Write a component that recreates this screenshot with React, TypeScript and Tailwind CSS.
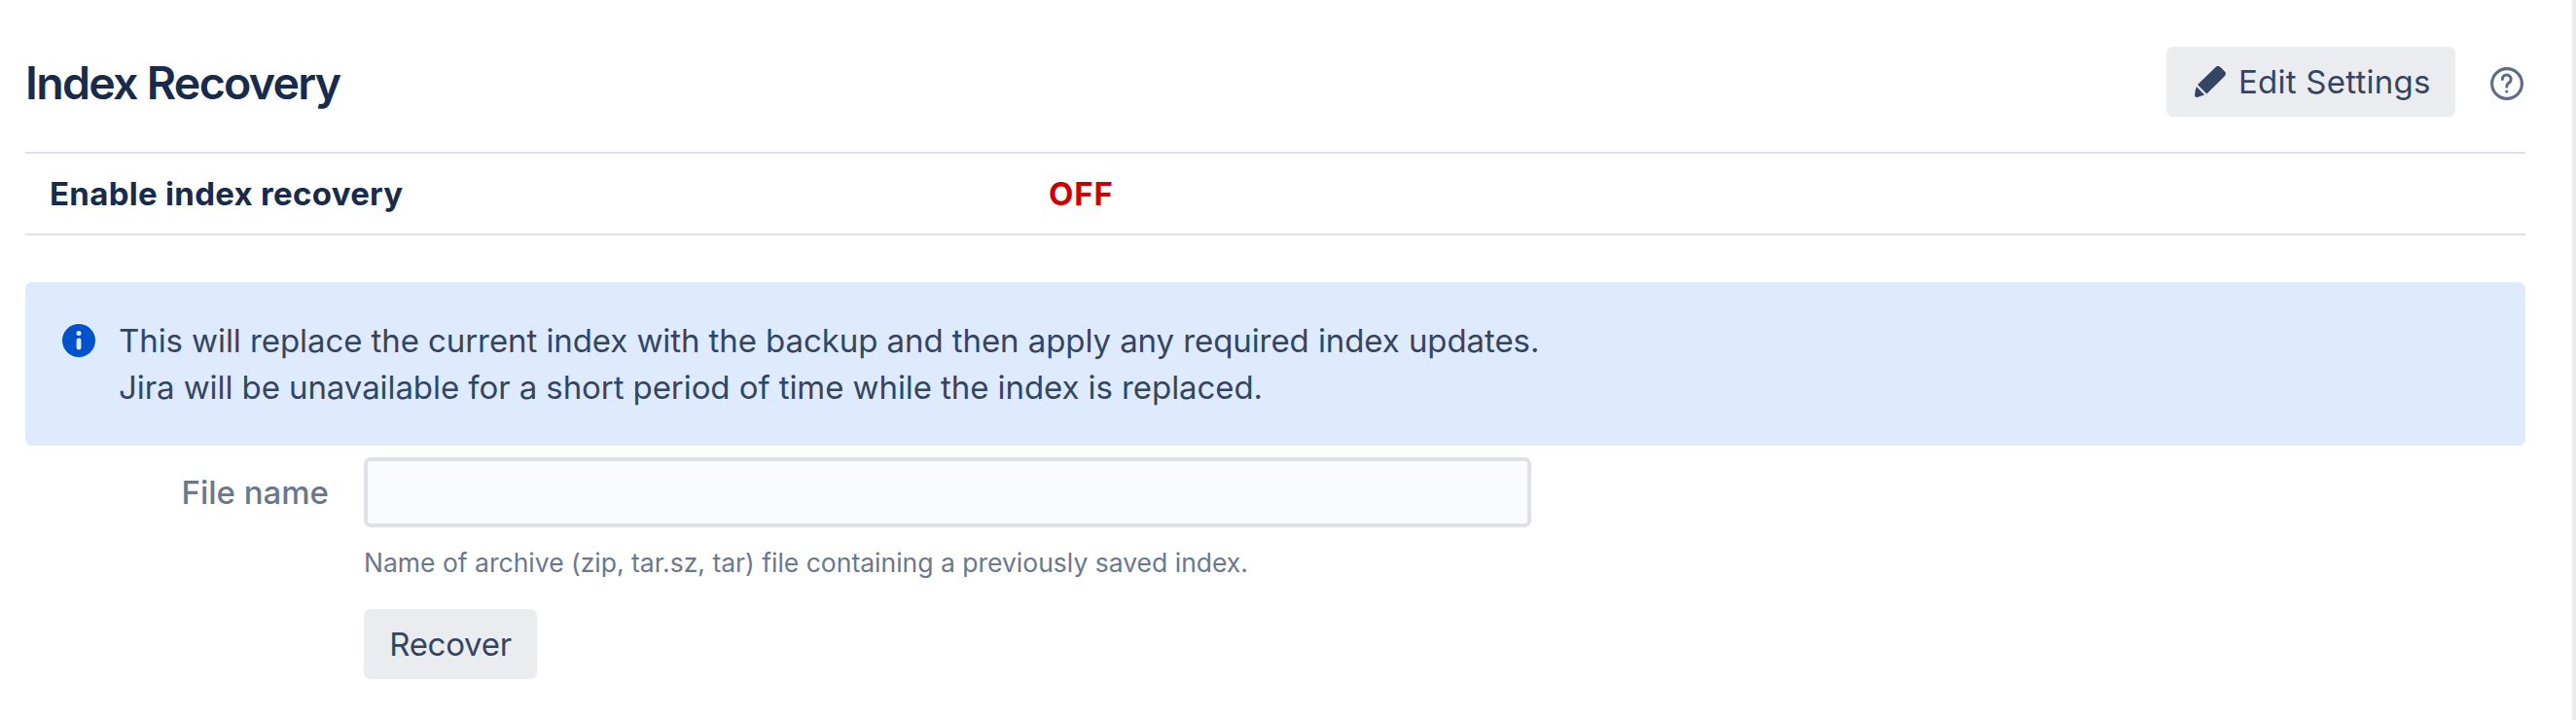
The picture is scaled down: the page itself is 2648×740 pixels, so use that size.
function PencilIcon() {
  return (
    <svg className="h-8 w-8 shrink-0" viewBox="0 0 32 32" fill="currentColor">
      <path d="M21.3 1.4a3.8 3.8 0 0 1 5.4 0l3.9 3.9a3.8 3.8 0 0 1 0 5.4L12.4 28.6 3 19.3z" transform="translate(0 -.2)" />
      <path d="M2 21 10.1 29.4 2.6 32Q0 32.2.1 29.7Q.2 25 2 21z" />
    </svg>
  );
}

function HelpIcon() {
  return (
    <svg className="h-[34px] w-[34px] shrink-0" viewBox="0 0 34 34" fill="none" stroke="currentColor">
      <circle cx="17" cy="17" r="15.4" strokeWidth="3.1" />
      <path
        d="M12.3 12.4a4.4 4.4 0 1 1 6.7 3.7c-1.5 1-2.2 1.9-2.2 4"
        strokeWidth="3"
        strokeLinecap="round"
        strokeLinejoin="round"
      />
      <circle cx="16.8" cy="25" r="1.6" fill="currentColor" stroke="none" />
    </svg>
  );
}

function InfoIcon() {
  return (
    <svg className="h-[34px] w-[34px] shrink-0" viewBox="0 0 34 34">
      <circle cx="17" cy="17" r="17" fill="#0052cc" />
      <circle cx="17" cy="9.6" r="2.5" fill="#deebff" />
      <rect x="14.6" y="14.6" width="4.8" height="12" rx="2.4" fill="#deebff" />
    </svg>
  );
}

export default function App() {
  return (
    <div className="flex h-[740px] w-[2648px] overflow-hidden bg-white font-['Inter',sans-serif] text-[33px] leading-[48px] text-[#172b4d]">
      <main className="w-[2644px] pr-12 pl-[26px]">
        <header className="flex h-[156px] items-start pt-12">
          <h1 className="mt-[9px] text-[46.5px] leading-[56px] font-semibold tracking-[-1.7px]">
            Index Recovery
          </h1>
          <button className="ml-auto flex h-[72px] w-[297px] items-center rounded-[7px] bg-[#ebecf0] pl-[29px] tracking-[0.25px] text-[#344563]">
            <PencilIcon />
            <span className="ml-[13px]">Edit Settings</span>
          </button>
          <span className="mt-[21px] mr-[2px] ml-9 text-[#5e6c84]">
            <HelpIcon />
          </span>
        </header>

        <div className="flex h-[86px] items-center border-y-2 border-[#dfe1e6] font-bold">
          <div className="w-[1052px] pl-[25px] tracking-[0.3px]">Enable index recovery</div>
          <div className="tracking-[0.85px] text-[#cc0000]">OFF</div>
        </div>

        <div className="mt-12 flex h-[168px] rounded-[7px] bg-[#deebff] pt-9 pl-[38px] text-[#344563]">
          <span className="mt-[7px]">
            <InfoIcon />
          </span>
          <p className="ml-6 tracking-[-0.08px]">
            This will replace the current index with the backup and then apply any required index updates.
            <br />
            Jira will be unavailable for a short period of time while the index is replaced.
          </p>
        </div>

        <form className="mt-3 flex">
          <label htmlFor="file-name" className="mt-3 w-[348px] pr-9 text-right font-medium text-[#6b778c]">
            File name
          </label>
          <div className="flex flex-col items-start">
            <input
              id="file-name"
              type="text"
              className="h-[72px] w-[1200px] rounded-[7px] border-4 border-[#dfe1e6] bg-[#fafbfc] px-3"
            />
            <p className="mt-4 text-[26.5px] leading-10 text-[#6b778c]">
              Name of archive (zip, tar.sz, tar) file containing a previously saved index.
            </p>
            <button
              type="button"
              className="mt-7 h-[72px] w-[178px] rounded-[7px] bg-[#ebecf0] tracking-[-0.27px] text-[#344563]"
            >
              Recover
            </button>
          </div>
        </form>
      </main>
      <div className="w-1 bg-[#ebebeb]" />
    </div>
  );
}
